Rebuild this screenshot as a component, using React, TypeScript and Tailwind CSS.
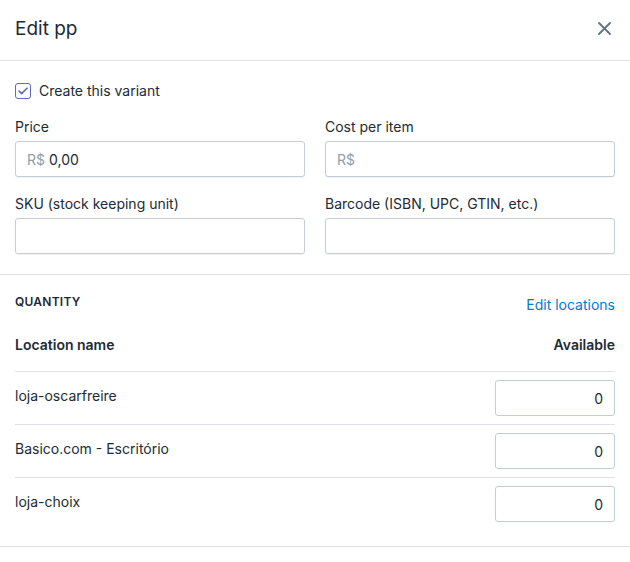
import React from 'react';

const locations = [
    { name: "loja-oscarfreire", available: 0 },
    { name: "Basico.com - Escritório", available: 0 },
    { name: "loja-choix", available: 0 },
];

const inputBox = "w-full h-[36px] px-[11px] rounded-[3px] border border-[#c4cdd5] bg-white shadow-[0_1px_0_rgba(22,29,37,0.05)] flex items-center text-[14px]";

const Field: React.FC<{ label: string; prefix?: string; value?: string }> = ({ label, prefix, value }) => (
    <div>
        <div className="h-5 leading-5 mb-1 text-[14px] text-[#212b36]">{label}</div>
        <div className={inputBox}>
            {prefix && <span className="text-[#919eab] mr-[4px]">{prefix}</span>}
            {value && <span className="text-[#212b36]">{value}</span>}
        </div>
    </div>
);

export default function App() {
    return (
        <div className="w-[630px] h-[562px] bg-white text-[#212b36] font-['Inter','Noto_Sans',sans-serif] text-[14px]">
            {/* Header */}
            <div className="h-[61px] px-[15px] flex items-center justify-between border-b border-[#dfe3e8]">
                <h1 className="text-[19px] leading-6 font-normal text-[#212b36] -mt-[3px]">Edit pp</h1>
                <button className="w-5 h-5 flex items-center justify-center mr-[1px] -mt-[3px]" aria-label="Close">
                    <svg width="13" height="13" viewBox="0 0 13 13" fill="none" stroke="#637381" strokeWidth="1.8" strokeLinecap="round">
                        <path d="M1 1l11 11M12 1L1 12" />
                    </svg>
                </button>
            </div>

            {/* Variant fields */}
            <div className="px-[15px] pt-[20px] pb-[20px] border-b border-[#dfe3e8]">
                <label className="flex items-center h-5 gap-[8px]">
                    <span className="w-4 h-4 rounded-[3px] border border-[#5c6ac4] bg-white flex items-center justify-center">
                        <svg width="10" height="8" viewBox="0 0 10 8" fill="none" stroke="#5c6ac4" strokeWidth="1.6" strokeLinecap="round" strokeLinejoin="round">
                            <path d="M1 4l2.6 2.6L9 1.2" />
                        </svg>
                    </span>
                    <span className="leading-5">Create this variant</span>
                </label>
                <div className="grid grid-cols-2 gap-x-[20px] gap-y-[17px] mt-[16px]">
                    <Field label="Price" prefix="R$" value="0,00" />
                    <Field label="Cost per item" prefix="R$" />
                    <Field label="SKU (stock keeping unit)" />
                    <Field label="Barcode (ISBN, UPC, GTIN, etc.)" />
                </div>
            </div>

            {/* Quantity */}
            <div className="px-[15px] pt-[18px] pb-[16px] border-b border-[#dfe3e8]">
                <div className="flex items-start justify-between h-5">
                    <h2 className="text-[12px] font-semibold uppercase tracking-[0.02em] leading-4 mt-[1px]">Quantity</h2>
                    <a className="text-[#007ace] leading-5 mt-[2px]">Edit locations</a>
                </div>
                <div className="flex justify-between pt-[22px] pb-[16px] border-b border-[#dfe3e8] font-semibold leading-5">
                    <span>Location name</span>
                    <span>Available</span>
                </div>
                {locations.map((loc, i) => (
                    <div key={loc.name} className={`flex items-center justify-between py-[8px] ${i < locations.length - 1 ? 'border-b border-[#dfe3e8]' : ''}`}>
                        <span className="-mt-[5px]">{loc.name}</span>
                        <div className="w-[120px] h-[36px] px-[11px] rounded-[3px] border border-[#c4cdd5] bg-white flex items-center justify-end">
                            {loc.available}
                        </div>
                    </div>
                ))}
            </div>
        </div>
    );
}
